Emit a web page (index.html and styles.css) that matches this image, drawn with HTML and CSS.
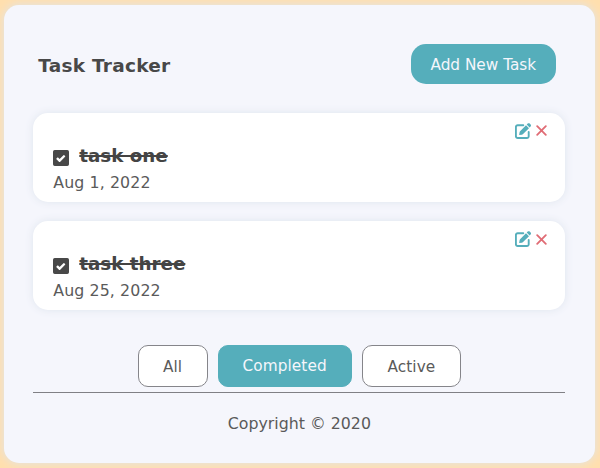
FILE: index.html
```html
<!DOCTYPE html>
<html lang="en">
<head>
<meta charset="utf-8">
<title>Task Tracker</title>
<link rel="stylesheet" href="styles.css">
</head>
<body>
<svg class="defs" aria-hidden="true">
  <symbol id="check" viewBox="0 0 448 448"><path fill-rule="evenodd" d="M400 448H48a48 48 0 0 1-48-48V48A48 48 0 0 1 48 0h352a48 48 0 0 1 48 48v352a48 48 0 0 1-48 48ZM196 333l142-142a16 16 0 0 0 0-23l-22-22a16 16 0 0 0-23 0L184 254l-42-42a16 16 0 0 0-22 0l-23 23a16 16 0 0 0 0 22l76 76a16 16 0 0 0 23 0Z"/></symbol>
  <symbol id="edit" viewBox="0 0 16 16"><path d="M8.3 2.2H2.7A1.8 1.8 0 0 0 .9 4v9.2A1.8 1.8 0 0 0 2.7 15h9.2a1.8 1.8 0 0 0 1.8-1.8V9" fill="none" stroke="currentColor" stroke-width="1.9" stroke-linecap="round"/><path d="m11 2.2 3 3-6.2 6c-.3.3-.6.4-.9.5l-2.8.4.5-2.9c0-.3.2-.6.5-.9ZM11.7 1.6l1-1c.6-.6 1.4-.6 2 0l.9.9c.6.6.6 1.4 0 2l-1 1Z"/></symbol>
  <symbol id="close" viewBox="0 0 12 12"><path d="m1.3 1.3 9.4 9.4m0-9.4-9.4 9.4" fill="none" stroke="currentColor" stroke-width="2" stroke-linecap="round"/></symbol>
</svg>
<main class="container">
  <header class="header">
    <h1>Task Tracker</h1>
    <button class="add">Add New Task</button>
  </header>
  <section class="tasks">
    <article class="task">
      <div class="actions"><svg class="edit"><use href="#edit"/></svg><svg class="close"><use href="#close"/></svg></div>
      <h2><svg class="check"><use href="#check"/></svg><span class="name">task one</span></h2>
      <p>Aug 1, 2022</p>
    </article>
    <article class="task">
      <div class="actions"><svg class="edit"><use href="#edit"/></svg><svg class="close"><use href="#close"/></svg></div>
      <h2><svg class="check"><use href="#check"/></svg><span class="name">task three</span></h2>
      <p>Aug 25, 2022</p>
    </article>
  </section>
  <nav class="filters">
    <button class="all">All</button>
    <button class="completed">Completed</button>
    <button class="active">Active</button>
  </nav>
  <footer>Copyright © 2020</footer>
</main>
</body>
</html>
```
FILE: styles.css
```css
* { box-sizing: border-box; }
body {
  margin: 0;
  height: 468px;
  overflow: hidden;
  padding: 5px 5px 5px 4px;
  background: #ffdfae;
  color: #5a5a5a;
  font: 15.8px/20px "DejaVu Sans", Verdana, sans-serif;
}
.defs { position: absolute; width: 0; height: 0; }
.container {
  height: 458px;
  padding: 39px 29.6px 0 29.3px;
  border-radius: 15px;
  background: #f5f6fc;
  box-shadow: 0 0 10px #dfe5ed;
}
h1, h2, p { margin: 0; }
button { font: inherit; font-size: 15.3px; padding: 0; color: inherit; }
.header {
  display: flex;
  align-items: center;
  justify-content: space-between;
  height: 40px;
  padding: 0 9.6px 0 5px;
}
h1 { font-size: 18.5px; line-height: 22px; letter-spacing: .25px; padding-top: 3px; color: #484848; }
.add {
  width: 145px;
  height: 40px;
  padding-top: 1px;
  border: 0;
  border-radius: 15px;
  background: #55aebb;
  color: #f5f6fc;
}
.tasks { display: grid; gap: 19.5px; margin-top: 28.8px; }
.task {
  height: 89px;
  padding: 10px 18.6px 0 20px;
  border-radius: 15px;
  background: #fff;
  box-shadow: 0 0 8px #dfe5ee;
}
.actions { display: flex; align-items: center; justify-content: flex-end; gap: 5px; height: 16px; }
.actions svg { overflow: visible; }
.edit { width: 16px; height: 16px; color: #55aebb; fill: currentColor; }
.close { width: 11px; height: 11px; color: #e06c75; }
h2 { display: flex; align-items: center; gap: 10px; height: 24px; margin-top: 5px; font-size: 18.3px; line-height: 24px; color: #444; }
.check { width: 16px; height: 16px; margin-top: 4px; fill: #484848; }
.name { text-decoration: line-through; text-decoration-thickness: 2px; }
.task p { margin-top: 5px; line-height: 20px; letter-spacing: .1px; }
.filters { display: flex; justify-content: center; gap: 10px; margin-top: 34.7px; }
.filters button { height: 42px; border: 1px solid #85858a; border-radius: 10px; background: #fff; letter-spacing: .1px; }
.filters .all { width: 70px; padding-top: 2px; }
.filters .completed { width: 134px; border-color: #55aebb; background: #55aebb; color: #f5f6fc; }
.filters .active { width: 99.5px; padding-top: 2px; }
footer { margin-top: 5px; padding-top: 21px; border-top: 1px solid #808085; text-align: center; }
```
